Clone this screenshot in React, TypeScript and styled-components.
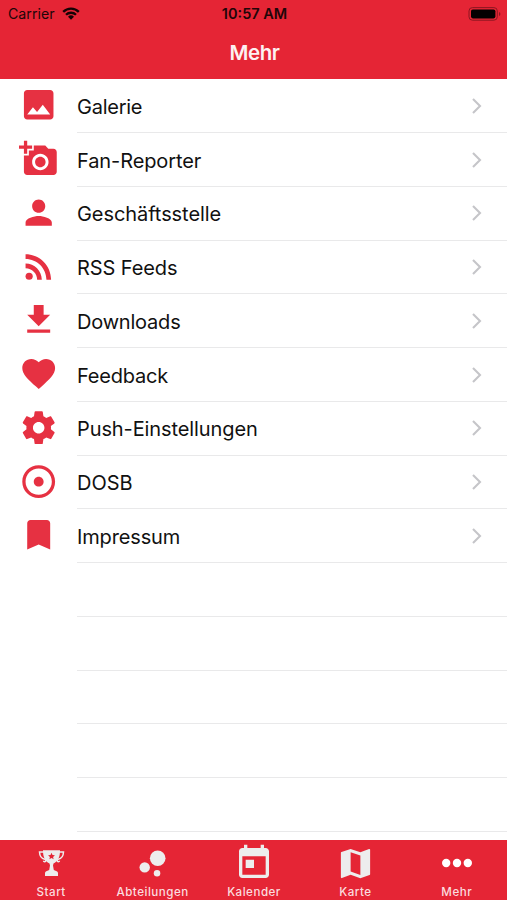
import React from "react";
import styled, { createGlobalStyle } from "styled-components";
import type { IconType } from "react-icons";
import {
  MdImage, MdAddAPhoto, MdPerson, MdRssFeed, MdFavorite,
  MdAdjust, MdBookmark, MdBubbleChart, MdMap,
} from "react-icons/md";

const Global = createGlobalStyle`
  * { box-sizing: border-box; }
  body { margin: 0; background: #fff; font-family: Inter, "Liberation Sans", sans-serif; }
`;

const Screen = styled.div`
  width: 507px;
  height: 900px;
  display: flex;
  flex-direction: column;
  overflow: hidden;
  background: #fff;
`;

const Header = styled.header`
  flex: 0 0 79px;
  background: #e52535;
`;

const StatusBar = styled.div`
  height: 27px;
  display: grid;
  grid-template-columns: 1fr auto 1fr;
  align-items: center;
  padding: 0 6px 0 8px;
  color: #210508;
`;

const Carrier = styled.div`
  display: flex;
  align-items: center;
  gap: 7px;
  font-size: 14.2px;
  line-height: 27px;
  svg { display: block; margin-top: -1px; }
`;

const Clock = styled.div`
  font-size: 14.5px;
  font-weight: 600;
  line-height: 27px;
  white-space: nowrap;
`;

const Battery = styled.div`
  justify-self: end;
  svg { display: block; }
`;

const Title = styled.h1`
  margin: 0;
  height: 52px;
  padding-left: 2px;
  text-align: center;
  color: #fdf1f2;
  font-size: 20.5px;
  font-weight: 600;
  line-height: 51px;
  letter-spacing: -0.4px;
`;

const List = styled.ul`
  flex: 1;
  min-height: 0;
  margin: 0;
  padding: 0.4px 0 0;
  overflow: hidden;
  list-style: none;
`;

const Row = styled.li`
  height: 53.75px;
  display: grid;
  grid-template-columns: 77px 1fr;
`;

const IconCell = styled.div`
  display: flex;
  align-items: center;
  justify-content: center;
  padding: 0 0 2.4px 0.6px;
  color: #e63142;
  svg { display: block; width: 39.4px; height: 39.4px; }
`;

const RowBody = styled.div`
  display: flex;
  align-items: center;
  justify-content: space-between;
  padding-right: 24px;
  border-bottom: 1px solid #e9e9ea;
`;

const Label = styled.span<{ $tracking: number }>`
  padding-top: 2px;
  color: #111;
  font-size: 20px;
  line-height: 26px;
  letter-spacing: ${(p) => p.$tracking}px;
  white-space: nowrap;
`;

const TabBar = styled.nav`
  flex: 0 0 60px;
  display: grid;
  grid-template-columns: repeat(5, 1fr);
  background: #e52535;
`;

const Tab = styled.div<{ $active?: boolean }>`
  display: flex;
  flex-direction: column;
  align-items: center;
  padding-left: 1px;
  color: ${(p) => (p.$active ? "#fff" : "#ededed")};
`;

const TabIcon = styled.div`
  height: 45px;
  display: flex;
  align-items: center;
  padding-top: 1px;
  svg { display: block; }
`;

const TabLabel = styled.span`
  font-size: 11.6px;
  font-weight: 500;
  line-height: 14px;
  letter-spacing: 0.5px;
  color: #fbdcdf;
`;

const Download = () => (
  <svg viewBox="0 0 24 24" fill="currentColor">
    <path d="M19 9h-4V3H9v6H5l7 7 7-7zM5 18v2h14v-2H5z" />
  </svg>
);

const Gear = () => (
  <svg viewBox="0 0 24 24" fill="currentColor">
    <path d="M19.43 12.98c.04-.32.07-.64.07-.98s-.03-.66-.07-.98l2.11-1.65c.19-.15.24-.42.12-.64l-2-3.46c-.12-.22-.39-.3-.61-.22l-2.49 1c-.52-.4-1.08-.73-1.69-.98l-.38-2.65C14.46 2.18 14.25 2 14 2h-4c-.25 0-.46.18-.49.42l-.38 2.65c-.61.25-1.17.59-1.69.98l-2.49-1c-.23-.09-.49 0-.61.22l-2 3.46c-.13.22-.07.49.12.64l2.11 1.65c-.04.32-.07.65-.07.98s.03.66.07.98l-2.11 1.65c-.19.15-.24.42-.12.64l2 3.46c.12.22.39.3.61.22l2.49-1c.52.4 1.08.73 1.69.98l.38 2.65c.03.24.24.42.49.42h4c.25 0 .46-.18.49-.42l.38-2.65c.61-.25 1.17-.59 1.69-.98l2.49 1c.23.09.49 0 .61-.22l2-3.46c.12-.22.07-.49-.12-.64l-2.11-1.65zM12 15.5c-1.93 0-3.5-1.57-3.5-3.5s1.57-3.5 3.5-3.5 3.5 1.57 3.5 3.5-1.57 3.5-3.5 3.5z" />
  </svg>
);

const Chevron = () => (
  <svg width="12" height="18" viewBox="0 0 12 18" fill="none" stroke="#c5c5c9" strokeWidth="2.1">
    <path d="M2 2l7 7-7 7" />
  </svg>
);

const Wifi = () => (
  <svg width="18" height="13" viewBox="0 0 18 13" fill="none" stroke="#160204" strokeWidth="2.3">
    <path d="M1.2 4.9a11 11 0 0 1 15.6 0M4 7.8a7.1 7.1 0 0 1 10 0" />
    <path d="M9 12.7L6 9.7a4.3 4.3 0 0 1 6 0z" fill="#160204" stroke="none" />
  </svg>
);

const BatteryIcon = () => (
  <svg width="33" height="14" viewBox="0 0 33 14">
    <rect x="1" y=".6" width="28.3" height="12.6" rx="3.4" fill="none" stroke="#8c1721" />
    <rect x="3" y="2.4" width="24.4" height="9" rx="1.8" fill="#050001" />
    <path d="M31 5v4q1.4-.6 1.4-2T31 5z" fill="#8c1721" />
  </svg>
);

const Trophy = () => (
  <svg width="27" height="28" viewBox="0 0 27 28">
    <g fill="none" stroke="currentColor" strokeWidth="1.5">
      <path d="M6 3H1.500c.2 4.400 2.200 6.600 5.200 7.200 1.400.3 1.500 2.300.2 2.500-.9.1-1.300-.4-1.300-1" />
      <path d="M21 3h4.500c-.2 4.400-2.200 6.600-5.200 7.200-1.400.3-1.500 2.300-.2 2.500.9.1 1.300-.4 1.300-1" />
    </g>
    <path d="M5 1.300h17c0 6.500-1.500 10.500-6.500 13.200l-.5 2 .8 4.500 3.400 1.400.8 1.400V27H7v-3.200l.8-1.400 3.400-1.400.8-4.500-.5-2C6.500 11.800 5 7.800 5 1.300z" fill="currentColor" />
    <path d="M13.500 3.800l1 2.200 2.400.3-1.800 1.600.5 2.400-2.100-1.200-2.100 1.200.5-2.400-1.800-1.600 2.400-.3z" fill="#e52535" />
  </svg>
);

const Calendar = () => (
  <svg width="40" height="40" viewBox="0 0 24 24" fill="currentColor">
    <path d="M19 3h-1V1h-2v2H8V1H6v2H5c-1.110 0-1.990.9-1.990 2L3 19c0 1.100.890 2 2 2h14c1.100 0 2-.9 2-2V5c0-1.100-.9-2-2-2zm0 16H5V8h14v11zM7 10h5v5H7z" />
  </svg>
);

const Dots = () => (
  <svg width="32" height="10" viewBox="0 0 32 10" fill="currentColor">
    <circle cx="5.200" cy="5" r="4.200" />
    <circle cx="16" cy="5" r="4.200" />
    <circle cx="26.800" cy="5" r="4.200" />
  </svg>
);

const entries: { label: string; icon: IconType | React.FC; tracking?: number }[] = [
  { label: "Galerie", icon: MdImage, tracking: -0.25 },
  { label: "Fan-Reporter", icon: MdAddAPhoto, tracking: -0.1 },
  { label: "Geschäftsstelle", icon: MdPerson, tracking: -0.07 },
  { label: "RSS Feeds", icon: MdRssFeed, tracking: -0.1 },
  { label: "Downloads", icon: Download },
  { label: "Feedback", icon: MdFavorite },
  { label: "Push-Einstellungen", icon: Gear, tracking: -0.1 },
  { label: "DOSB", icon: MdAdjust, tracking: 0 },
  { label: "Impressum", icon: MdBookmark, tracking: -0.15 },
];

const emptyRows = [0, 1, 2, 3, 4];

export default function App() {
  return (
    <>
      <Global />
      <Screen>
        <Header>
          <StatusBar>
            <Carrier>Carrier <Wifi /></Carrier>
            <Clock>10:57 AM</Clock>
            <Battery><BatteryIcon /></Battery>
          </StatusBar>
          <Title>Mehr</Title>
        </Header>
        <List>
          {entries.map(({ label, icon: Icon, tracking = -0.2 }) => (
            <Row key={label}>
              <IconCell><Icon /></IconCell>
              <RowBody>
                <Label $tracking={tracking}>{label}</Label>
                <Chevron />
              </RowBody>
            </Row>
          ))}
          {emptyRows.map((n) => (
            <Row key={n}><span /><RowBody /></Row>
          ))}
        </List>
        <TabBar>
          <Tab><TabIcon><Trophy /></TabIcon><TabLabel>Start</TabLabel></Tab>
          <Tab><TabIcon><MdBubbleChart size={39} /></TabIcon><TabLabel>Abteilungen</TabLabel></Tab>
          <Tab><TabIcon><Calendar /></TabIcon><TabLabel>Kalender</TabLabel></Tab>
          <Tab><TabIcon><MdMap size={39} /></TabIcon><TabLabel>Karte</TabLabel></Tab>
          <Tab $active><TabIcon><Dots /></TabIcon><TabLabel>Mehr</TabLabel></Tab>
        </TabBar>
      </Screen>
    </>
  );
}
